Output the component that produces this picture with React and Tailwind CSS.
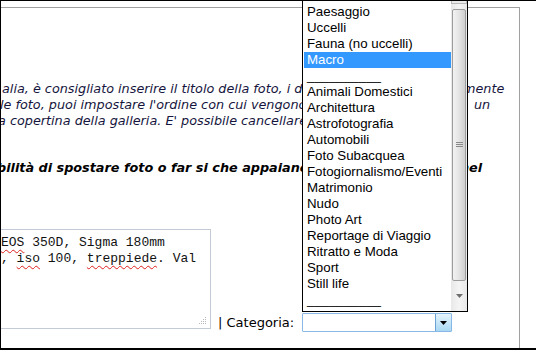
import React from "react";

const categories = [
  "Paesaggio",
  "Uccelli",
  "Fauna (no uccelli)",
  "Macro",
  "__________",
  "Animali Domestici",
  "Architettura",
  "Astrofotografia",
  "Automobili",
  "Foto Subacquea",
  "Fotogiornalismo/Eventi",
  "Matrimonio",
  "Nudo",
  "Photo Art",
  "Reportage di Viaggio",
  "Ritratto e Moda",
  "Sport",
  "Still life",
  "__________",
];

const Spell = ({ children }) => (
  <span className="underline decoration-wavy decoration-[#e02020] decoration-1 underline-offset-[3px]">
    {children}
  </span>
);

const App = () => {
  return (
    <div className="relative w-[536px] h-[350px] overflow-hidden bg-white border-l border-t border-b-2 border-black">
      {/* form frame */}
      <div className="mt-[6px] w-[519px] h-[380px] border-t border-r border-[#a0a0a0] overflow-hidden pt-[73px] font-['DejaVu_Sans',sans-serif] text-[12.8px] leading-[16px]">
        <div className="italic text-[#15153d]">
          <div className="flex ml-[1px]">
            <span className="w-[461px] shrink-0 overflow-hidden whitespace-nowrap">
              alia, è consigliato inserire il titolo della foto, i dati di scatto e una breve descrizione. Opziona
            </span>
            <span className="whitespace-nowrap">mente</span>
          </div>
          <div className="flex ml-[-1px]">
            <span className="w-[474px] shrink-0 overflow-hidden whitespace-nowrap">
              le foto, puoi impostare l'ordine con cui vengono visualizzate e scegliere
            </span>
            <span className="whitespace-nowrap">un</span>
          </div>
          <div className="flex ml-[-3px]">
            <span className="whitespace-nowrap">
              a copertina della galleria. E' possibile cancellare le foto non più gradite.
            </span>
          </div>
        </div>

        <div className="flex ml-[-4px] mt-[31px] italic font-bold text-black">
          <span className="w-[463px] shrink-0 overflow-hidden whitespace-nowrap">
            bilità di spostare foto o far si che appaiano in cima alla galleria
          </span>
          <span className="whitespace-nowrap">nel</span>
        </div>

        <div className="flex items-start mt-[53px]">
          {/* textarea */}
          <div className="relative ml-[-9px] w-[219px] h-[100px] shrink-0 border border-[#c3cbd6] bg-white pl-[8px] pt-[5px] font-['Liberation_Mono',monospace] text-[13px] leading-[16px] not-italic text-[#111] whitespace-nowrap overflow-hidden">
            <div>
              <Spell>EOS</Spell> 350D, Sigma 180mm
            </div>
            <div>
              , <Spell>iso</Spell> 100, <Spell>treppiede</Spell>. Val
            </div>
            <svg className="absolute right-[3px] bottom-[3px]" width="9" height="9" viewBox="0 0 9 9">
              <rect x="7" y="1" width="1" height="1" fill="#b8b8b8" />
              <rect x="5" y="3" width="1" height="1" fill="#b8b8b8" />
              <rect x="7" y="3" width="1" height="1" fill="#b8b8b8" />
              <rect x="3" y="5" width="1" height="1" fill="#b8b8b8" />
              <rect x="5" y="5" width="1" height="1" fill="#b8b8b8" />
              <rect x="7" y="5" width="1" height="1" fill="#b8b8b8" />
              <rect x="1" y="7" width="1" height="1" fill="#b8b8b8" />
              <rect x="3" y="7" width="1" height="1" fill="#b8b8b8" />
              <rect x="5" y="7" width="1" height="1" fill="#b8b8b8" />
              <rect x="7" y="7" width="1" height="1" fill="#b8b8b8" />
            </svg>
          </div>

          <div className="flex items-center mt-[84px] ml-[7px] h-[19px]">
            <span className="w-[84px] shrink-0 text-[13px] not-italic text-black whitespace-nowrap">| Categoria:</span>
            {/* closed select */}
            <div className="flex w-[150px] h-[19px] border border-[#8ab8e6] bg-white rounded-[1px]">
              <div className="flex-1" />
              <div className="flex items-center justify-center w-[16px] h-[17px] border-l border-[#6aa3d3] bg-gradient-to-b from-[#e6f4fc] to-[#a9d8f3]">
                <svg width="7" height="4" viewBox="0 0 7 4">
                  <path d="M0 0 H7 L3.5 4 Z" fill="#000" />
                </svg>
              </div>
            </div>
          </div>
        </div>
      </div>

      {/* open dropdown list */}
      <div className="absolute left-[301px] top-[-15px] z-10 flex w-[166px] h-[326px] border border-black bg-white font-['Liberation_Sans',Arial,sans-serif] text-[13.3px] leading-[16px] text-black">
        <div className="flex-1 pl-[1px] pt-[17px]">
          {categories.map((c, i) => (
            <div
              key={i}
              className={
                c === "Macro"
                  ? "h-[16px] pl-[3px] whitespace-nowrap bg-[#3399ff] text-white"
                  : "h-[16px] pl-[3px] whitespace-nowrap"
              }
            >
              {c}
            </div>
          ))}
        </div>
        {/* scrollbar */}
        <div className="flex flex-col w-[16px] bg-gradient-to-r from-[#e8e8e8] via-[#f4f4f4] to-[#e8e8e8]">
          <div className="h-[17px] shrink-0 border border-[#b9b9b9] bg-[#eaeaea]" />
          <div className="h-[5px] shrink-0" />
          <div className="relative flex items-center justify-center h-[272px] shrink-0 mx-[1px] rounded-[2px] border border-[#9c9c9c] bg-gradient-to-r from-[#f2f2f2] via-[#e4e4e4] to-[#cfcfcf]">
            <svg width="7" height="6" viewBox="0 0 7 6">
              <rect x="0" y="0" width="7" height="1" fill="#8a8a8a" />
              <rect x="0" y="2" width="7" height="1" fill="#8a8a8a" />
              <rect x="0" y="4" width="7" height="1" fill="#8a8a8a" />
            </svg>
          </div>
          <div className="flex-1 flex items-center justify-center">
            <svg width="7" height="4" viewBox="0 0 7 4">
              <path d="M0 0 H7 L3.5 4 Z" fill="#6e6e6e" />
            </svg>
          </div>
        </div>
      </div>
    </div>
  );
};

export default App;
